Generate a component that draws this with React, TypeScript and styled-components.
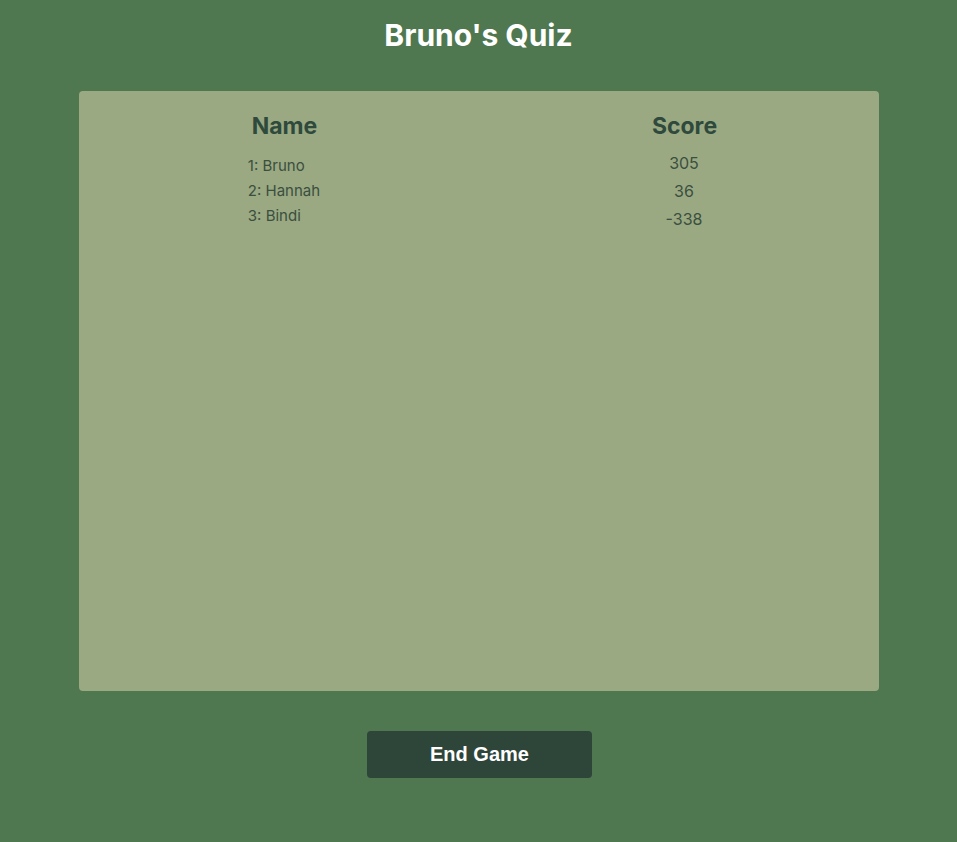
import React from 'react';
import styled, { createGlobalStyle } from 'styled-components';

type Player = {
  name: string;
  score: number;
};

const players: Player[] = [
  { name: 'Bruno', score: 305 },
  { name: 'Hannah', score: 36 },
  { name: 'Bindi', score: -338 },
];

const GlobalStyle = createGlobalStyle`
  html, body {
    margin: 0;
    padding: 0;
    background: #4f7750;
  }
  body {
    font-family: Inter, 'Noto Sans', sans-serif;
  }
`;

const Page = styled.div`
  min-height: 842px;
  display: flex;
  flex-direction: column;
  align-items: center;
  padding-top: 17px;
  box-sizing: border-box;
`;

const Title = styled.h1`
  margin: 0 0 38px;
  font-size: 30px;
  line-height: 36px;
  font-weight: 700;
  color: #ffffff;
`;

const Board = styled.div`
  width: 800px;
  height: 600px;
  background: #9aa982;
  border-radius: 4px;
  display: grid;
  grid-template-columns: 1fr 1fr;
  align-items: start;
`;

const Column = styled.div`
  padding-left: 10px;
  display: flex;
  flex-direction: column;
  align-items: center;
  color: #2f4a3c;
`;

const Heading = styled.h2`
  margin: 21px 0 0;
  padding-left: 2px;
  font-size: 23px;
  line-height: 29px;
  font-weight: 700;
  color: #2f4a3c;
`;

const List = styled.ul<{ $gap: number; $size: number; $line: number; $align: string }>`
  list-style: none;
  padding: 0 0 0 1px;
  margin: ${({ $gap }) => $gap}px 0 0;
  font-size: ${({ $size }) => $size}px;
  line-height: ${({ $line }) => $line}px;
  text-align: ${({ $align }) => $align};
  color: #3b4f3f;
`;

const EndButton = styled.button`
  margin: 40px 0 0 2px;
  width: 225px;
  height: 47px;
  border: none;
  border-radius: 4px;
  background: #2e4539;
  color: #ffffff;
  font-family: 'Liberation Sans', Arial, sans-serif;
  font-weight: 700;
  font-size: 20px;
  cursor: pointer;
`;

export default function App() {
  return (
    <>
      <GlobalStyle />
      <Page>
        <Title>Bruno's Quiz</Title>
        <Board>
          <Column>
            <Heading>Name</Heading>
            <List $gap={12} $size={15} $line={25} $align="left">
              {players.map((p, i) => (
                <li key={p.name}>{`${i + 1}: ${p.name}`}</li>
              ))}
            </List>
          </Column>
          <Column>
            <Heading>Score</Heading>
            <List $gap={8} $size={16} $line={28} $align="center">
              {players.map((p) => (
                <li key={p.name}>{p.score}</li>
              ))}
            </List>
          </Column>
        </Board>
        <EndButton>End Game</EndButton>
      </Page>
    </>
  );
}
